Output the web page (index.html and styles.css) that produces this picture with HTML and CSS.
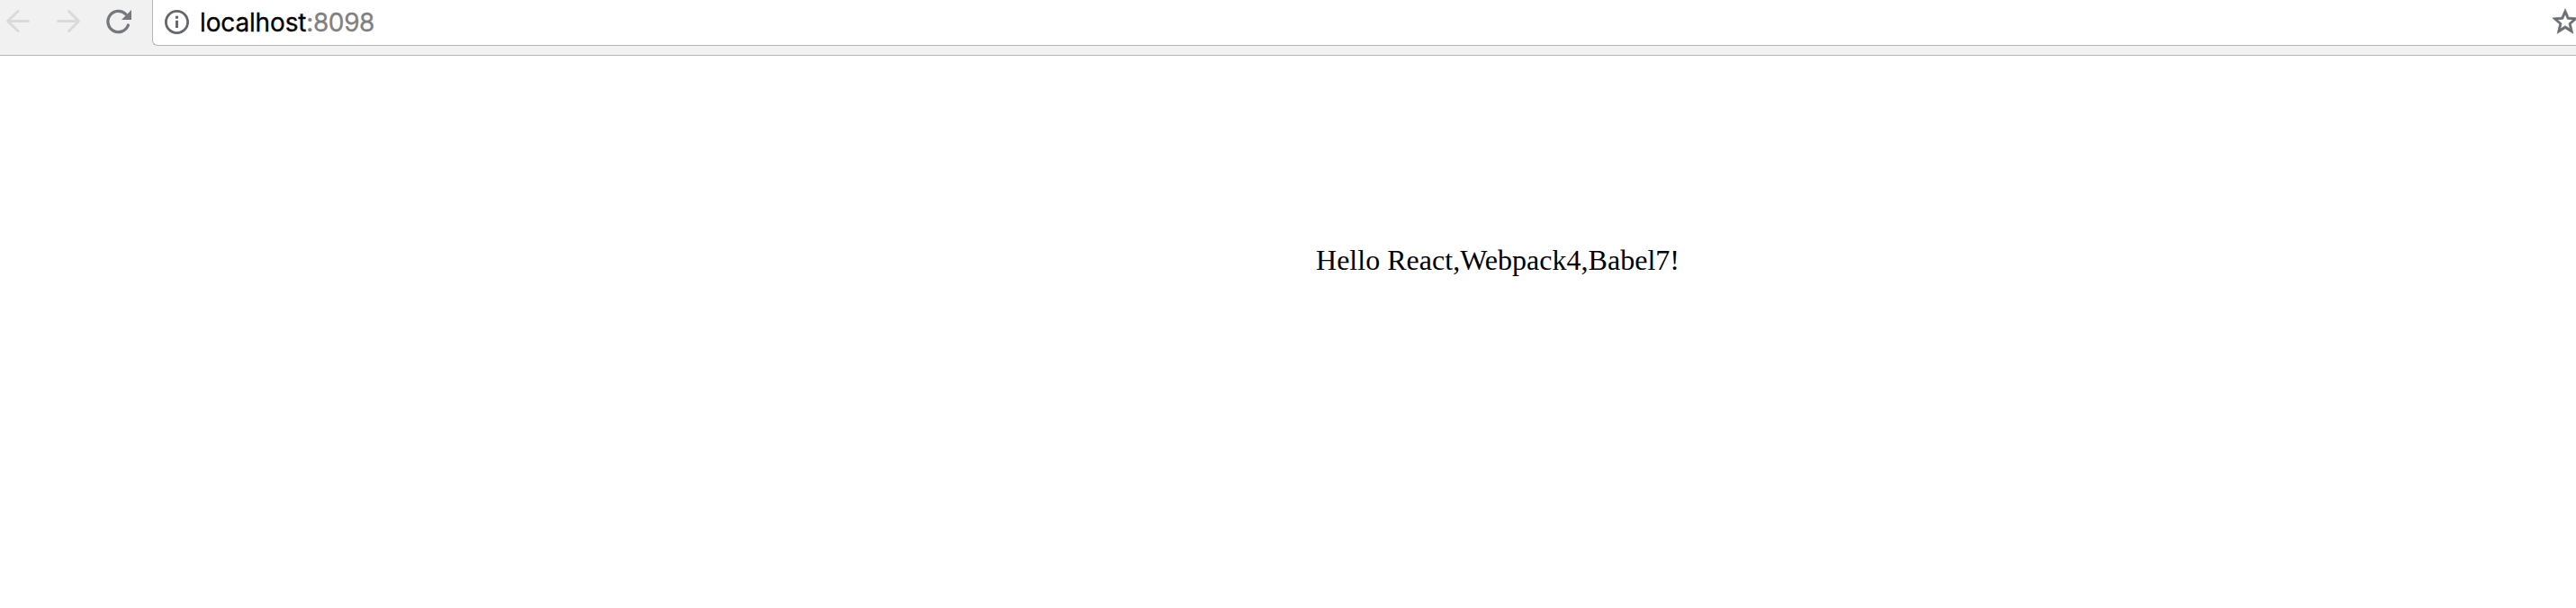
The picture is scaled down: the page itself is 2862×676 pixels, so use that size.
FILE: index.html
```html
<!DOCTYPE html>
<html lang="en">

<head>
    <meta charset="UTF-8">
    <meta name="viewport" content="width=device-width, initial-scale=1.0">
    <title>localhost:8098</title>
    <link rel="stylesheet" href="styles.css">
</head>

<body>
    <div class="toolbar">
        <div class="nav">
            <svg class="icon arrow" viewBox="0 0 50 50">
                <path d="M31.5 23.5H9M20 12.5L8.5 23.5L20 34.5"/>
            </svg>
            <svg class="icon arrow" viewBox="0 0 50 50">
                <path d="M14.5 23.5H37M26.5 12.5L37.5 23.5L26.5 34.5"/>
            </svg>
            <svg class="icon reload" viewBox="0 0 50 50">
                <path class="line" d="M42.4 28A11.6 11.6 0 1 1 39.8 15.9"/>
                <path class="head" d="M46 11V22H35Z"/>
            </svg>
        </div>
        <div class="address">
            <svg class="icon info" viewBox="0 0 28 28">
                <circle cx="13.5" cy="14.5" r="12.1"/>
                <path d="M12 7.7h3v3h-3zM12 12.8h3v8.2h-3z"/>
            </svg>
            <div class="url">localhost<span class="port">:8098</span></div>
            <svg class="icon star" viewBox="0 0 24 24">
                <path d="M22 9.2L14.8 8.6L12 2L9.2 8.6L2 9.2L7.5 14L5.8 21.3L12 17.4L18.2 21.3L16.5 14ZM12 15.3L8.2 17.7L9.2 13.4L5.9 10.5L10.3 10.1L12 6.1L13.7 10.1L18.1 10.5L14.8 13.4L15.8 17.7Z"/>
            </svg>
        </div>
    </div>

    <div id="app">
        <div class="hello">Hello React,Webpack4,Babel7!</div>
    </div>
</body>

</html>
```

FILE: styles.css
```css
* {
    margin: 0;
    padding: 0;
    box-sizing: border-box;
}

body {
    background: #fff;
    overflow: hidden;
}

.toolbar {
    display: flex;
    align-items: flex-start;
    height: 62px;
    background: #f1f1f1;
    border-bottom: 1px solid #b5b5b5;
}

.icon {
    display: block;
    flex: none;
}

.nav {
    display: flex;
    width: 169px;
    flex: none;
}

.nav .icon {
    width: 50px;
    height: 50px;
}

.arrow {
    fill: none;
    stroke: #d9dada;
    stroke-width: 3;
    stroke-linecap: round;
    stroke-linejoin: round;
}

.reload .line {
    fill: none;
    stroke: #75797d;
    stroke-width: 3.3;
    stroke-linecap: round;
}

.reload .head {
    fill: #75797d;
}

/* address bar */
.address {
    display: flex;
    align-items: center;
    flex: 1;
    min-width: 0;
    height: 51px;
    padding-left: 13px;
    background: #fff;
    border: 1px solid #b5b5b5;
    border-width: 0 0 1px 1px;
    border-radius: 0 0 0 6px;
}

.info {
    width: 28px;
    height: 28px;
    margin-bottom: 2px;
}

.info circle {
    fill: none;
    stroke: #64686e;
    stroke-width: 2.8;
}

.info path {
    fill: #64686e;
}

.url {
    padding-top: 1px;
    margin-left: 11px;
    font: 28px/49px Inter, "Liberation Sans", sans-serif;
    letter-spacing: -0.15px;
    color: #000;
    -webkit-text-stroke: 0.3px;
}

.port {
    color: #808080;
    letter-spacing: -0.4px;
}

.star {
    width: 34px;
    height: 34px;
    margin: 0 -5px 2px auto;
}

.star path {
    fill: #6b6f74;
    fill-rule: evenodd;
    stroke: #6b6f74;
    stroke-width: 0.5;
}

/* page */
#app {
    padding: 208px 0 0 1462px;
}

.hello {
    font: 32px/38px "Liberation Serif", "Times New Roman", serif;
    letter-spacing: 0.02px;
    color: #000;
    white-space: nowrap;
}
```
